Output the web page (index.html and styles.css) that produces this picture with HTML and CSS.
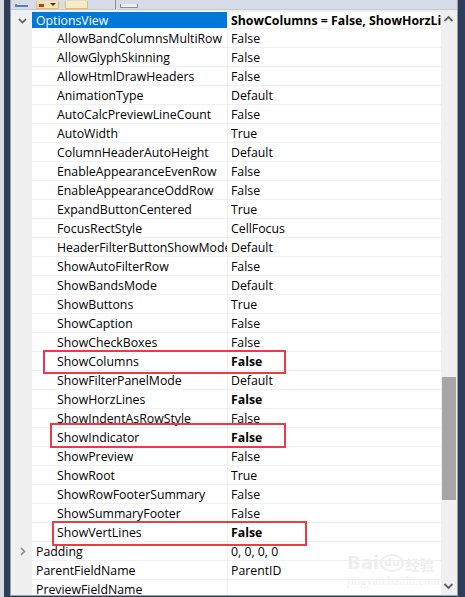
FILE: index.html
```html
<!DOCTYPE html>
<html>
<head>
<meta charset="utf-8">
<link rel="stylesheet" href="styles.css">
</head>
<body>
<div class="page">
  <div class="edge"></div>
  <div class="desk-left"></div>
  <div class="panel">
    <div class="toolbar">
      <span class="tb-icon"></span>
      <span class="tb-btn tb-btn1"><span class="tb-arrow"></span></span>
      <span class="tb-btn tb-btn2"></span>
      <span class="tb-sep"></span>
      <span class="tb-box"></span>
    </div>
    <div class="grid">
      <div class="rows">
        <div class="row top first sel"><span class="gut"><svg width="9" height="6" viewBox="0 0 9 6"><path d="M1 1 L4.5 4.5 L8 1" fill="none" stroke="#5a5a5a" stroke-width="1.6"/></svg></span><span class="name">OptionsView</span><span class="val b">ShowColumns = False, ShowHorzLines = False, ShowIndicator = False</span></div>
        <div class="row"><span class="gut"></span><span class="name">AllowBandColumnsMultiRow</span><span class="val">False</span></div>
        <div class="row"><span class="gut"></span><span class="name">AllowGlyphSkinning</span><span class="val">False</span></div>
        <div class="row"><span class="gut"></span><span class="name">AllowHtmlDrawHeaders</span><span class="val">False</span></div>
        <div class="row"><span class="gut"></span><span class="name">AnimationType</span><span class="val">Default</span></div>
        <div class="row"><span class="gut"></span><span class="name">AutoCalcPreviewLineCount</span><span class="val">False</span></div>
        <div class="row"><span class="gut"></span><span class="name">AutoWidth</span><span class="val">True</span></div>
        <div class="row"><span class="gut"></span><span class="name">ColumnHeaderAutoHeight</span><span class="val">Default</span></div>
        <div class="row"><span class="gut"></span><span class="name">EnableAppearanceEvenRow</span><span class="val">False</span></div>
        <div class="row"><span class="gut"></span><span class="name">EnableAppearanceOddRow</span><span class="val">False</span></div>
        <div class="row"><span class="gut"></span><span class="name">ExpandButtonCentered</span><span class="val">True</span></div>
        <div class="row"><span class="gut"></span><span class="name">FocusRectStyle</span><span class="val">CellFocus</span></div>
        <div class="row"><span class="gut"></span><span class="name">HeaderFilterButtonShowMode</span><span class="val">Default</span></div>
        <div class="row"><span class="gut"></span><span class="name">ShowAutoFilterRow</span><span class="val">False</span></div>
        <div class="row"><span class="gut"></span><span class="name">ShowBandsMode</span><span class="val">Default</span></div>
        <div class="row"><span class="gut"></span><span class="name">ShowButtons</span><span class="val">True</span></div>
        <div class="row"><span class="gut"></span><span class="name">ShowCaption</span><span class="val">False</span></div>
        <div class="row"><span class="gut"></span><span class="name">ShowCheckBoxes</span><span class="val">False</span></div>
        <div class="row"><span class="gut"></span><span class="name">ShowColumns</span><span class="val b">False</span></div>
        <div class="row"><span class="gut"></span><span class="name">ShowFilterPanelMode</span><span class="val">Default</span></div>
        <div class="row"><span class="gut"></span><span class="name">ShowHorzLines</span><span class="val b">False</span></div>
        <div class="row"><span class="gut"></span><span class="name">ShowIndentAsRowStyle</span><span class="val">False</span></div>
        <div class="row"><span class="gut"></span><span class="name">ShowIndicator</span><span class="val b">False</span></div>
        <div class="row"><span class="gut"></span><span class="name">ShowPreview</span><span class="val">False</span></div>
        <div class="row"><span class="gut"></span><span class="name">ShowRoot</span><span class="val">True</span></div>
        <div class="row"><span class="gut"></span><span class="name">ShowRowFooterSummary</span><span class="val">False</span></div>
        <div class="row"><span class="gut"></span><span class="name">ShowSummaryFooter</span><span class="val">False</span></div>
        <div class="row"><span class="gut"></span><span class="name">ShowVertLines</span><span class="val b">False</span></div>
        <div class="row top"><span class="gut"><svg width="6" height="9" viewBox="0 0 6 9"><path d="M1 1 L4.5 4.5 L1 8" fill="none" stroke="#8a8a8a" stroke-width="1.6"/></svg></span><span class="name">Padding</span><span class="val">0, 0, 0, 0</span></div>
        <div class="row top"><span class="gut"></span><span class="name">ParentFieldName</span><span class="val">ParentID</span></div>
        <div class="row top"><span class="gut"></span><span class="name">PreviewFieldName</span><span class="val"></span></div>
      </div>
      <div class="scrollbar">
        <svg class="arrow" width="11" height="8" viewBox="0 0 11 8"><path d="M1.5 6 L5.5 2 L9.5 6" fill="none" stroke="#606060" stroke-width="1.8"/></svg>
        <div class="track"><div class="thumb"></div></div>
        <svg class="arrow" width="11" height="8" viewBox="0 0 11 8"><path d="M1.5 2 L5.5 6 L9.5 2" fill="none" stroke="#606060" stroke-width="1.8"/></svg>
      </div>
    </div>
  </div>
  <div class="desk-right"></div>

  <div class="mark m1"></div>
  <div class="mark m2"></div>
  <div class="mark m3"></div>

  <div class="watermark">
    <div class="wm-top"><span class="wm-bai">Bai</span><span class="wm-du">du</span><span class="wm-cn">经验</span></div>
    <div class="wm-url">jingyan.baidu.com</div>
  </div>
</div>
</body>
</html>
```

FILE: styles.css
```css
html, body {
  margin: 0;
  padding: 0;
}
body {
  width: 465px;
  height: 597px;
  overflow: hidden;
  background: #2c3c5b;
  font-family: "Open Sans", "Noto Sans", "Noto Sans CJK SC", sans-serif;
  font-size: 12.3px;
  color: #000;
}
.page {
  position: relative;
  display: flex;
  width: 465px;
  height: 597px;
}
.edge {
  width: 4px;
  background: #d8dbe2;
}
.desk-left {
  width: 6px;
  background: #2d3d5c;
}
.desk-right {
  flex: 1;
  background: #2d3d5c;
}
.panel {
  width: 446px;
  height: 595px;
  border-left: 1px solid #9a9ea6;
  border-right: 1px solid #9a9ea6;
  border-bottom: 1px solid #9a9ea6;
  display: flex;
  flex-direction: column;
  background: #f0f0f0;
  overflow: hidden;
}
.toolbar {
  height: 9px;
  flex: none;
  background: #d6dce8;
  border-bottom: 1px solid #c4cad6;
  display: flex;
  align-items: flex-end;
  overflow: hidden;
}
.tb-icon {
  margin-left: 4px;
  width: 13px;
  height: 3px;
  margin-bottom: 2px;
  border-bottom: 2px solid #5a7fb5;
  border-left: 2px solid #7a8aa0;
  box-sizing: border-box;
}
.tb-btn {
  height: 8px;
  box-sizing: border-box;
  border: 1px solid #e2be68;
  border-top: none;
  display: flex;
  align-items: flex-end;
  justify-content: center;
  overflow: hidden;
}
.tb-btn1 {
  margin-left: 8px;
  width: 23px;
  background: #fbe2ae;
}
.tb-btn1::before {
  content: "";
  width: 5px;
  height: 3px;
  background: #c0392b;
  margin-bottom: 1px;
}
.tb-arrow {
  width: 0;
  height: 0;
  margin-left: 6px;
  margin-bottom: 2px;
  border-left: 3px solid transparent;
  border-right: 3px solid transparent;
  border-top: 3px solid #333;
}
.tb-btn2 {
  margin-left: 6px;
  width: 23px;
  background: #fde9bf;
}
.tb-sep {
  margin-left: 27px;
  width: 1px;
  height: 9px;
  background: #8c8f96;
}
.tb-box {
  margin-left: 4px;
  width: 16px;
  height: 3px;
  margin-bottom: 1px;
  border: 1px solid #8c8f96;
  border-top: none;
  background: #eef0f4;
}
.grid {
  flex: 1;
  display: flex;
  min-height: 0;
}
.rows {
  width: 430px;
  padding-top: 2px;
  display: flex;
  flex-direction: column;
  overflow: hidden;
}
.row {
  flex: none;
  display: grid;
  grid-template-columns: 21px 196px 213px;
  height: 19px;
  box-sizing: border-box;
  line-height: 19px;
  white-space: nowrap;
}
.row.first {
  height: 17px;
  line-height: 17px;
}
.gut {
  background: #f0f0f0;
  display: flex;
  align-items: center;
  justify-content: center;
}
.row.top .gut {
  padding-left: 2px;
}
.name {
  background: #fff;
  border-bottom: 1px solid #f0f0f0;
  border-right: 1px solid #f0f0f0;
  padding-left: 25px;
  overflow: hidden;
}
.row.top .name {
  padding-left: 4px;
}
.row.sel .name {
  background: #0078d7;
  color: #fff;
  border-bottom-color: #fff;
}
.val {
  background: #fff;
  border-bottom: 1px solid #f0f0f0;
  padding-left: 3px;
  overflow: hidden;
}
.b {
  font-weight: bold;
}
.scrollbar {
  width: 15px;
  display: flex;
  flex-direction: column;
  align-items: center;
  background: #f0f0f0;
  padding: 5px 0 5px 0;
  box-sizing: border-box;
}
.arrow {
  flex: none;
}
.track {
  flex: 1;
  width: 100%;
  position: relative;
}
.thumb {
  position: absolute;
  left: 1px;
  right: 0;
  top: 354px;
  height: 123px;
  background: #a6a6a6;
}
.mark {
  position: absolute;
  border: 2px solid #ee3a44;
  box-sizing: border-box;
}
.m1 { left: 43px; top: 350px; width: 243px; height: 24px; }
.m2 { left: 50px; top: 423px; width: 236px; height: 25px; }
.m3 { left: 52px; top: 521px; width: 255px; height: 25px; }
.watermark {
  position: absolute;
  left: 347px;
  top: 551px;
  color: #efefef;
  pointer-events: none;
}
.wm-top {
  display: flex;
  align-items: flex-end;
  font-family: "DejaVu Sans", sans-serif;
  font-weight: bold;
  font-size: 18px;
  line-height: 24px;
}
.wm-du {
  font-size: 11px;
  line-height: 14px;
  border: 2px solid #efefef;
  border-radius: 50%;
  padding: 0 2px;
  margin: 0 2px 3px 1px;
}
.wm-cn {
  font-family: "Noto Sans CJK SC", sans-serif;
  font-size: 14px;
  line-height: 22px;
}
.wm-url {
  font-family: "Liberation Serif", serif;
  font-size: 12px;
  line-height: 12px;
  letter-spacing: 0.2px;
}
```
